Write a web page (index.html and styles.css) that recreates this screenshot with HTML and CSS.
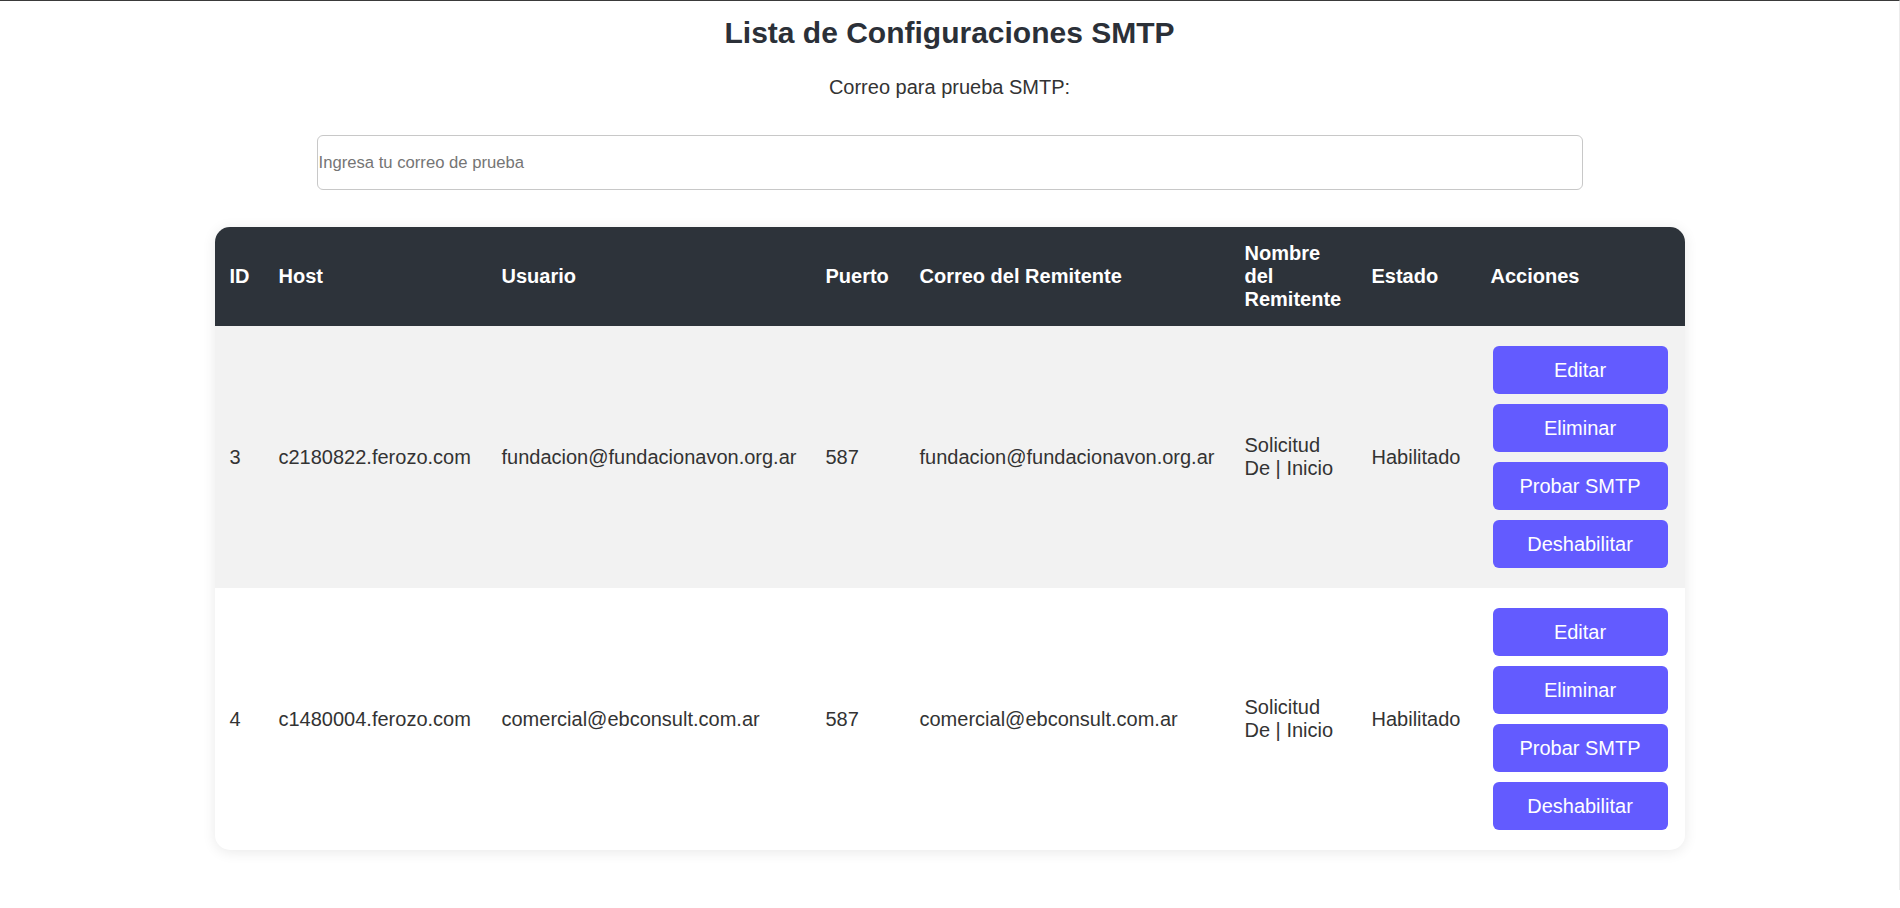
FILE: index.html
```html
<!DOCTYPE html>
<html lang="es">
<head>
<meta charset="utf-8">
<title>Lista de Configuraciones SMTP</title>
<link rel="stylesheet" href="styles.css">
</head>
<body>
<main class="page">
  <h2 class="title">Lista de Configuraciones SMTP</h2>
  <label class="test-label" for="testEmail">Correo para prueba SMTP:</label>
  <input class="test-input" id="testEmail" type="email" placeholder="Ingresa tu correo de prueba">

  <div class="card">
    <table class="smtp-table">
      <colgroup>
        <col class="c-id"><col class="c-host"><col class="c-user"><col class="c-port">
        <col class="c-from"><col class="c-name"><col class="c-state"><col class="c-actions">
      </colgroup>
      <thead>
        <tr>
          <th>ID</th>
          <th>Host</th>
          <th>Usuario</th>
          <th>Puerto</th>
          <th>Correo del Remitente</th>
          <th>Nombre del Remitente</th>
          <th>Estado</th>
          <th>Acciones</th>
        </tr>
      </thead>
      <tbody>
        <tr class="row-alt">
          <td>3</td>
          <td>c2180822.ferozo.com</td>
          <td>fundacion@fundacionavon.org.ar</td>
          <td>587</td>
          <td>fundacion@fundacionavon.org.ar</td>
          <td>Solicitud De | Inicio</td>
          <td>Habilitado</td>
          <td>
            <div class="actions">
              <button class="btn">Editar</button>
              <button class="btn">Eliminar</button>
              <button class="btn">Probar SMTP</button>
              <button class="btn">Deshabilitar</button>
            </div>
          </td>
        </tr>
        <tr>
          <td>4</td>
          <td>c1480004.ferozo.com</td>
          <td>comercial@ebconsult.com.ar</td>
          <td>587</td>
          <td>comercial@ebconsult.com.ar</td>
          <td>Solicitud De | Inicio</td>
          <td>Habilitado</td>
          <td>
            <div class="actions">
              <button class="btn">Editar</button>
              <button class="btn">Eliminar</button>
              <button class="btn">Probar SMTP</button>
              <button class="btn">Deshabilitar</button>
            </div>
          </td>
        </tr>
      </tbody>
    </table>
  </div>
</main>
</body>
</html>
```

FILE: styles.css
```css
html {
  border-top: 1px solid #3a3a3a;
  border-right: 1px solid #ececec;
  background: #fff;
}
body {
  margin: 0;
  font-family: "Liberation Sans", Arial, sans-serif;
  color: #333;
  font-size: 20px;
}
.page {
  display: flex;
  flex-direction: column;
  align-items: center;
  padding-top: 15px;
  padding-bottom: 40px;
}
.title {
  margin: 0;
  font-size: 30px;
  font-weight: bold;
  color: #2b3038;
  line-height: 34px;
}
.test-label {
  margin-top: 26px;
  font-size: 20px;
  line-height: 23px;
  color: #333;
}
.test-input {
  margin-top: 36px;
  width: 1266px;
  height: 55px;
  box-sizing: border-box;
  border: 1px solid #c8c8c8;
  border-radius: 6px;
  padding: 0 1px;
  font-family: "Liberation Sans", Arial, sans-serif;
  font-size: 16.67px;
  color: #333;
  outline: none;
}
.test-input::placeholder {
  color: #757575;
}
.card {
  margin-top: 37px;
  width: 1470px;
  border-radius: 15px;
  overflow: hidden;
  box-shadow: 0 2px 14px rgba(0, 0, 0, 0.09);
  background: #fff;
}
.smtp-table {
  width: 100%;
  border-collapse: collapse;
  table-layout: fixed;
}
.c-id { width: 49px; }
.c-host { width: 223px; }
.c-user { width: 324px; }
.c-port { width: 94px; }
.c-from { width: 325px; }
.c-name { width: 127px; }
.c-state { width: 119px; }
.c-actions { width: 209px; }
.smtp-table th {
  background: #2d333a;
  color: #fff;
  font-weight: bold;
  text-align: left;
  padding: 15px;
  line-height: 23px;
  vertical-align: middle;
}
.smtp-table td {
  padding: 15px;
  line-height: 23px;
  vertical-align: middle;
  color: #333;
  white-space: normal;
}
.row-alt td {
  background: #f2f2f2;
}
.actions {
  display: flex;
  flex-direction: column;
  align-items: center;
  gap: 10px;
  padding: 5px 0;
}
.btn {
  width: 175px;
  height: 48px;
  border: none;
  border-radius: 6px;
  background: #635bff;
  color: #fff;
  font-family: "Liberation Sans", Arial, sans-serif;
  font-size: 20px;
  padding: 0;
  cursor: pointer;
}
```
